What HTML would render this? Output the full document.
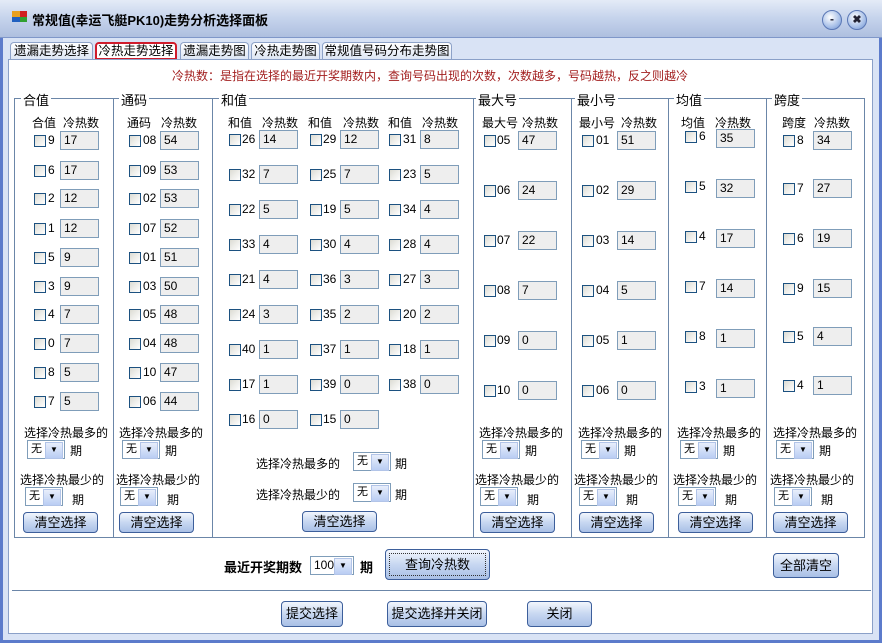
<!DOCTYPE html>
<html><head><meta charset="utf-8"><style>
*{margin:0;padding:0;box-sizing:border-box}
body{width:882px;height:643px;overflow:hidden;background:#5c7bcb;font:12px "Liberation Sans","WenQuanYi Zen Hei","Noto Sans CJK SC",sans-serif;color:#000;position:relative}
.a{position:absolute;white-space:nowrap}
#win{position:absolute;left:3px;top:0;width:876px;height:640px;background:#d9e3f5}
#title{position:absolute;left:0;top:0;width:882px;height:38px;background:linear-gradient(#e4ebf7,#c5d3ec 50%,#aebfdf);border-bottom:1px solid #7f97c9}
#panel{position:absolute;left:8px;top:59px;width:865px;height:575px;background:#fff;border:1px solid #8aa0c8}
.tab{position:absolute;top:42px;height:18px;border:1px solid #8da2c8;border-bottom:none;border-radius:4px 4px 0 0;background:linear-gradient(#fff,#dbe4f3);font-size:12.5px;line-height:16px;text-align:center;white-space:nowrap;overflow:visible}
.grp{position:absolute;top:98px;height:440px;border:1px solid #6b86a8}
.gl{position:absolute;top:90px;background:#fff;padding:0 2px;font-size:13px}
.cb{position:absolute;width:12px;height:12px;border:1px solid #1c5180;background:linear-gradient(135deg,#dcdcd4,#fff)}
.tb{position:absolute;width:39px;height:19px;border:1px solid #7f9db9;background:#eeeeee;padding-left:3px;line-height:17px}
.h{position:absolute;font-size:12px;white-space:nowrap}
.dd{position:absolute;width:38px;height:19px;border:1px solid #7f9db9;background:#fff;padding-left:3px;line-height:17px;font-size:11px}
.dd:after{content:"▼";position:absolute;right:1px;top:1px;width:16px;height:15px;background:linear-gradient(#e8eefb,#b9cdf3);border:1px solid #b2c4e8;font-size:8px;line-height:14px;text-align:center}
.btn{position:absolute;height:21px;border:1px solid #3d5f9b;border-radius:4px;background:linear-gradient(#f2f6fd,#c7d7f1 50%,#a9c0e6);text-align:center;line-height:19px;font-size:13px;white-space:nowrap}
</style></head><body>
<div id="win"></div>
<div id="title">
<div class="a" style="left:12px;top:11px;width:8px;height:6px;background:#e8a020"></div><div class="a" style="left:20px;top:11px;width:7px;height:6px;background:#d02020"></div><div class="a" style="left:12px;top:17px;width:8px;height:5px;background:#2060c0"></div><div class="a" style="left:20px;top:17px;width:7px;height:5px;background:#30a030"></div>
<div class="a" style="left:32px;top:10px;font-size:13px;font-weight:bold">常规值(幸运飞艇PK10)走势分析选择面板</div>
<div class="a" style="left:822px;top:10px;width:20px;height:20px;border-radius:50%;background:radial-gradient(circle at 40% 35%,#fff,#a8c0e8 60%,#6d8fcf);border:1px solid #5a77b5;text-align:center;font-weight:bold;line-height:16px;color:#223">-</div>
<div class="a" style="left:847px;top:10px;width:20px;height:20px;border-radius:50%;background:radial-gradient(circle at 40% 35%,#fff,#a8c0e8 60%,#6d8fcf);border:1px solid #5a77b5;text-align:center;font-weight:bold;line-height:18px;font-size:11px;color:#223">✖</div>
</div>
<div class="tab" style="left:10px;width:83px">遗漏走势选择</div>
<div class="tab" style="left:95px;width:82px;border:2px solid #d01c2c;background:#fff;height:18px;line-height:14px">冷热走势选择</div>
<div class="tab" style="left:180px;width:69px">遗漏走势图</div>
<div class="tab" style="left:251px;width:69px">冷热走势图</div>
<div class="tab" style="left:322px;width:130px">常规值号码分布走势图</div>
<div id="panel"></div>
<div class="a" style="left:172px;top:67px;color:#a32020">冷热数：是指在选择的最近开奖期数内，查询号码出现的次数，次数越多，号码越热，反之则越冷</div>

<div class="grp" style="left:14px;width:100px"></div>
<div class="grp" style="left:113px;width:100px"></div>
<div class="grp" style="left:212px;width:262px"></div>
<div class="grp" style="left:473px;width:99px"></div>
<div class="grp" style="left:571px;width:98px"></div>
<div class="grp" style="left:668px;width:99px"></div>
<div class="grp" style="left:766px;width:99px"></div>
<div class="gl" style="left:21px">合值</div><div class="gl" style="left:119px">通码</div><div class="gl" style="left:219px">和值</div><div class="gl" style="left:476px">最大号</div><div class="gl" style="left:575px">最小号</div><div class="gl" style="left:674px">均值</div><div class="gl" style="left:772px">跨度</div>

<div class="h" style="left:32px;top:114px">合值</div><div class="h" style="left:63px;top:114px">冷热数</div>
<div class="h" style="left:127px;top:114px">通码</div><div class="h" style="left:161px;top:114px">冷热数</div>
<div class="h" style="left:228px;top:114px">和值</div><div class="h" style="left:262px;top:114px">冷热数</div>
<div class="h" style="left:308px;top:114px">和值</div><div class="h" style="left:343px;top:114px">冷热数</div>
<div class="h" style="left:388px;top:114px">和值</div><div class="h" style="left:422px;top:114px">冷热数</div>
<div class="h" style="left:482px;top:114px">最大号</div><div class="h" style="left:522px;top:114px">冷热数</div>
<div class="h" style="left:579px;top:114px">最小号</div><div class="h" style="left:621px;top:114px">冷热数</div>
<div class="h" style="left:681px;top:114px">均值</div><div class="h" style="left:715px;top:114px">冷热数</div>
<div class="h" style="left:782px;top:114px">跨度</div><div class="h" style="left:814px;top:114px">冷热数</div>

<!-- 合值 -->
<div class="cb" style="left:34px;top:135px"></div><div class="a" style="left:48px;top:133px">9</div><div class="tb" style="left:60px;top:131px">17</div>
<div class="cb" style="left:34px;top:165px"></div><div class="a" style="left:48px;top:163px">6</div><div class="tb" style="left:60px;top:161px">17</div>
<div class="cb" style="left:34px;top:193px"></div><div class="a" style="left:48px;top:191px">2</div><div class="tb" style="left:60px;top:189px">12</div>
<div class="cb" style="left:34px;top:223px"></div><div class="a" style="left:48px;top:221px">1</div><div class="tb" style="left:60px;top:219px">12</div>
<div class="cb" style="left:34px;top:252px"></div><div class="a" style="left:48px;top:250px">5</div><div class="tb" style="left:60px;top:248px">9</div>
<div class="cb" style="left:34px;top:281px"></div><div class="a" style="left:48px;top:279px">3</div><div class="tb" style="left:60px;top:277px">9</div>
<div class="cb" style="left:34px;top:309px"></div><div class="a" style="left:48px;top:307px">4</div><div class="tb" style="left:60px;top:305px">7</div>
<div class="cb" style="left:34px;top:338px"></div><div class="a" style="left:48px;top:336px">0</div><div class="tb" style="left:60px;top:334px">7</div>
<div class="cb" style="left:34px;top:367px"></div><div class="a" style="left:48px;top:365px">8</div><div class="tb" style="left:60px;top:363px">5</div>
<div class="cb" style="left:34px;top:396px"></div><div class="a" style="left:48px;top:394px">7</div><div class="tb" style="left:60px;top:392px">5</div>
<!-- 通码 -->
<div class="cb" style="left:129px;top:135px"></div><div class="a" style="left:143px;top:133px">08</div><div class="tb" style="left:160px;top:131px">54</div>
<div class="cb" style="left:129px;top:165px"></div><div class="a" style="left:143px;top:163px">09</div><div class="tb" style="left:160px;top:161px">53</div>
<div class="cb" style="left:129px;top:193px"></div><div class="a" style="left:143px;top:191px">02</div><div class="tb" style="left:160px;top:189px">53</div>
<div class="cb" style="left:129px;top:223px"></div><div class="a" style="left:143px;top:221px">07</div><div class="tb" style="left:160px;top:219px">52</div>
<div class="cb" style="left:129px;top:252px"></div><div class="a" style="left:143px;top:250px">01</div><div class="tb" style="left:160px;top:248px">51</div>
<div class="cb" style="left:129px;top:281px"></div><div class="a" style="left:143px;top:279px">03</div><div class="tb" style="left:160px;top:277px">50</div>
<div class="cb" style="left:129px;top:309px"></div><div class="a" style="left:143px;top:307px">05</div><div class="tb" style="left:160px;top:305px">48</div>
<div class="cb" style="left:129px;top:338px"></div><div class="a" style="left:143px;top:336px">04</div><div class="tb" style="left:160px;top:334px">48</div>
<div class="cb" style="left:129px;top:367px"></div><div class="a" style="left:143px;top:365px">10</div><div class="tb" style="left:160px;top:363px">47</div>
<div class="cb" style="left:129px;top:396px"></div><div class="a" style="left:143px;top:394px">06</div><div class="tb" style="left:160px;top:392px">44</div>
<!-- 和值 col1 -->
<div class="cb" style="left:229px;top:134px"></div><div class="a" style="left:242px;top:132px">26</div><div class="tb" style="left:259px;top:130px">14</div>
<div class="cb" style="left:229px;top:169px"></div><div class="a" style="left:242px;top:167px">32</div><div class="tb" style="left:259px;top:165px">7</div>
<div class="cb" style="left:229px;top:204px"></div><div class="a" style="left:242px;top:202px">22</div><div class="tb" style="left:259px;top:200px">5</div>
<div class="cb" style="left:229px;top:239px"></div><div class="a" style="left:242px;top:237px">33</div><div class="tb" style="left:259px;top:235px">4</div>
<div class="cb" style="left:229px;top:274px"></div><div class="a" style="left:242px;top:272px">21</div><div class="tb" style="left:259px;top:270px">4</div>
<div class="cb" style="left:229px;top:309px"></div><div class="a" style="left:242px;top:307px">24</div><div class="tb" style="left:259px;top:305px">3</div>
<div class="cb" style="left:229px;top:344px"></div><div class="a" style="left:242px;top:342px">40</div><div class="tb" style="left:259px;top:340px">1</div>
<div class="cb" style="left:229px;top:379px"></div><div class="a" style="left:242px;top:377px">17</div><div class="tb" style="left:259px;top:375px">1</div>
<div class="cb" style="left:229px;top:414px"></div><div class="a" style="left:242px;top:412px">16</div><div class="tb" style="left:259px;top:410px">0</div>
<!-- col2 -->
<div class="cb" style="left:310px;top:134px"></div><div class="a" style="left:323px;top:132px">29</div><div class="tb" style="left:340px;top:130px">12</div>
<div class="cb" style="left:310px;top:169px"></div><div class="a" style="left:323px;top:167px">25</div><div class="tb" style="left:340px;top:165px">7</div>
<div class="cb" style="left:310px;top:204px"></div><div class="a" style="left:323px;top:202px">19</div><div class="tb" style="left:340px;top:200px">5</div>
<div class="cb" style="left:310px;top:239px"></div><div class="a" style="left:323px;top:237px">30</div><div class="tb" style="left:340px;top:235px">4</div>
<div class="cb" style="left:310px;top:274px"></div><div class="a" style="left:323px;top:272px">36</div><div class="tb" style="left:340px;top:270px">3</div>
<div class="cb" style="left:310px;top:309px"></div><div class="a" style="left:323px;top:307px">35</div><div class="tb" style="left:340px;top:305px">2</div>
<div class="cb" style="left:310px;top:344px"></div><div class="a" style="left:323px;top:342px">37</div><div class="tb" style="left:340px;top:340px">1</div>
<div class="cb" style="left:310px;top:379px"></div><div class="a" style="left:323px;top:377px">39</div><div class="tb" style="left:340px;top:375px">0</div>
<div class="cb" style="left:310px;top:414px"></div><div class="a" style="left:323px;top:412px">15</div><div class="tb" style="left:340px;top:410px">0</div>
<!-- col3 -->
<div class="cb" style="left:389px;top:134px"></div><div class="a" style="left:403px;top:132px">31</div><div class="tb" style="left:420px;top:130px">8</div>
<div class="cb" style="left:389px;top:169px"></div><div class="a" style="left:403px;top:167px">23</div><div class="tb" style="left:420px;top:165px">5</div>
<div class="cb" style="left:389px;top:204px"></div><div class="a" style="left:403px;top:202px">34</div><div class="tb" style="left:420px;top:200px">4</div>
<div class="cb" style="left:389px;top:239px"></div><div class="a" style="left:403px;top:237px">28</div><div class="tb" style="left:420px;top:235px">4</div>
<div class="cb" style="left:389px;top:274px"></div><div class="a" style="left:403px;top:272px">27</div><div class="tb" style="left:420px;top:270px">3</div>
<div class="cb" style="left:389px;top:309px"></div><div class="a" style="left:403px;top:307px">20</div><div class="tb" style="left:420px;top:305px">2</div>
<div class="cb" style="left:389px;top:344px"></div><div class="a" style="left:403px;top:342px">18</div><div class="tb" style="left:420px;top:340px">1</div>
<div class="cb" style="left:389px;top:379px"></div><div class="a" style="left:403px;top:377px">38</div><div class="tb" style="left:420px;top:375px">0</div>
<!-- 最大号 -->
<div class="cb" style="left:484px;top:135px"></div><div class="a" style="left:497px;top:133px">05</div><div class="tb" style="left:518px;top:131px">47</div>
<div class="cb" style="left:484px;top:185px"></div><div class="a" style="left:497px;top:183px">06</div><div class="tb" style="left:518px;top:181px">24</div>
<div class="cb" style="left:484px;top:235px"></div><div class="a" style="left:497px;top:233px">07</div><div class="tb" style="left:518px;top:231px">22</div>
<div class="cb" style="left:484px;top:285px"></div><div class="a" style="left:497px;top:283px">08</div><div class="tb" style="left:518px;top:281px">7</div>
<div class="cb" style="left:484px;top:335px"></div><div class="a" style="left:497px;top:333px">09</div><div class="tb" style="left:518px;top:331px">0</div>
<div class="cb" style="left:484px;top:385px"></div><div class="a" style="left:497px;top:383px">10</div><div class="tb" style="left:518px;top:381px">0</div>
<!-- 最小号 -->
<div class="cb" style="left:582px;top:135px"></div><div class="a" style="left:596px;top:133px">01</div><div class="tb" style="left:617px;top:131px">51</div>
<div class="cb" style="left:582px;top:185px"></div><div class="a" style="left:596px;top:183px">02</div><div class="tb" style="left:617px;top:181px">29</div>
<div class="cb" style="left:582px;top:235px"></div><div class="a" style="left:596px;top:233px">03</div><div class="tb" style="left:617px;top:231px">14</div>
<div class="cb" style="left:582px;top:285px"></div><div class="a" style="left:596px;top:283px">04</div><div class="tb" style="left:617px;top:281px">5</div>
<div class="cb" style="left:582px;top:335px"></div><div class="a" style="left:596px;top:333px">05</div><div class="tb" style="left:617px;top:331px">1</div>
<div class="cb" style="left:582px;top:385px"></div><div class="a" style="left:596px;top:383px">06</div><div class="tb" style="left:617px;top:381px">0</div>
<!-- 均值 -->
<div class="cb" style="left:685px;top:131px"></div><div class="a" style="left:699px;top:129px">6</div><div class="tb" style="left:716px;top:129px">35</div>
<div class="cb" style="left:685px;top:181px"></div><div class="a" style="left:699px;top:179px">5</div><div class="tb" style="left:716px;top:179px">32</div>
<div class="cb" style="left:685px;top:231px"></div><div class="a" style="left:699px;top:229px">4</div><div class="tb" style="left:716px;top:229px">17</div>
<div class="cb" style="left:685px;top:281px"></div><div class="a" style="left:699px;top:279px">7</div><div class="tb" style="left:716px;top:279px">14</div>
<div class="cb" style="left:685px;top:331px"></div><div class="a" style="left:699px;top:329px">8</div><div class="tb" style="left:716px;top:329px">1</div>
<div class="cb" style="left:685px;top:381px"></div><div class="a" style="left:699px;top:379px">3</div><div class="tb" style="left:716px;top:379px">1</div>
<!-- 跨度 -->
<div class="cb" style="left:783px;top:135px"></div><div class="a" style="left:797px;top:133px">8</div><div class="tb" style="left:813px;top:131px">34</div>
<div class="cb" style="left:783px;top:183px"></div><div class="a" style="left:797px;top:181px">7</div><div class="tb" style="left:813px;top:179px">27</div>
<div class="cb" style="left:783px;top:233px"></div><div class="a" style="left:797px;top:231px">6</div><div class="tb" style="left:813px;top:229px">19</div>
<div class="cb" style="left:783px;top:283px"></div><div class="a" style="left:797px;top:281px">9</div><div class="tb" style="left:813px;top:279px">15</div>
<div class="cb" style="left:783px;top:331px"></div><div class="a" style="left:797px;top:329px">5</div><div class="tb" style="left:813px;top:327px">4</div>
<div class="cb" style="left:783px;top:380px"></div><div class="a" style="left:797px;top:378px">4</div><div class="tb" style="left:813px;top:376px">1</div>

<!-- bottom controls per group -->
<div class="h" style="left:24px;top:424px">选择冷热最多的</div><div class="dd" style="left:27px;top:440px">无</div><div class="h" style="left:70px;top:442px">期</div>
<div class="h" style="left:20px;top:471px">选择冷热最少的</div><div class="dd" style="left:25px;top:487px">无</div><div class="h" style="left:72px;top:491px">期</div>
<div class="btn" style="left:23px;top:512px;width:75px">清空选择</div>

<div class="h" style="left:119px;top:424px">选择冷热最多的</div><div class="dd" style="left:122px;top:440px">无</div><div class="h" style="left:165px;top:442px">期</div>
<div class="h" style="left:116px;top:471px">选择冷热最少的</div><div class="dd" style="left:120px;top:487px">无</div><div class="h" style="left:167px;top:491px">期</div>
<div class="btn" style="left:119px;top:512px;width:75px">清空选择</div>

<div class="h" style="left:256px;top:455px">选择冷热最多的</div><div class="dd" style="left:353px;top:452px">无</div><div class="h" style="left:395px;top:455px">期</div>
<div class="h" style="left:256px;top:486px">选择冷热最少的</div><div class="dd" style="left:353px;top:483px">无</div><div class="h" style="left:395px;top:486px">期</div>
<div class="btn" style="left:302px;top:511px;width:75px">清空选择</div>

<div class="h" style="left:479px;top:424px">选择冷热最多的</div><div class="dd" style="left:482px;top:440px">无</div><div class="h" style="left:525px;top:442px">期</div>
<div class="h" style="left:475px;top:471px">选择冷热最少的</div><div class="dd" style="left:480px;top:487px">无</div><div class="h" style="left:527px;top:491px">期</div>
<div class="btn" style="left:480px;top:512px;width:75px">清空选择</div>

<div class="h" style="left:578px;top:424px">选择冷热最多的</div><div class="dd" style="left:581px;top:440px">无</div><div class="h" style="left:624px;top:442px">期</div>
<div class="h" style="left:574px;top:471px">选择冷热最少的</div><div class="dd" style="left:579px;top:487px">无</div><div class="h" style="left:626px;top:491px">期</div>
<div class="btn" style="left:579px;top:512px;width:75px">清空选择</div>

<div class="h" style="left:677px;top:424px">选择冷热最多的</div><div class="dd" style="left:680px;top:440px">无</div><div class="h" style="left:723px;top:442px">期</div>
<div class="h" style="left:673px;top:471px">选择冷热最少的</div><div class="dd" style="left:678px;top:487px">无</div><div class="h" style="left:725px;top:491px">期</div>
<div class="btn" style="left:678px;top:512px;width:75px">清空选择</div>

<div class="h" style="left:773px;top:424px">选择冷热最多的</div><div class="dd" style="left:776px;top:440px">无</div><div class="h" style="left:819px;top:442px">期</div>
<div class="h" style="left:770px;top:471px">选择冷热最少的</div><div class="dd" style="left:774px;top:487px">无</div><div class="h" style="left:821px;top:491px">期</div>
<div class="btn" style="left:773px;top:512px;width:75px">清空选择</div>

<!-- query row -->
<div class="h" style="left:224px;top:557px;font-weight:bold;font-size:13px">最近开奖期数</div>
<div class="dd" style="left:310px;top:556px;width:44px;font-size:12px">100</div>
<div class="h" style="left:360px;top:557px;font-weight:bold;font-size:13px">期</div>
<div class="btn" style="left:385px;top:549px;width:105px;height:31px;line-height:29px"><div style="position:absolute;left:3px;top:3px;right:3px;bottom:3px;border:1px dotted #333"></div>查询冷热数</div>
<div class="btn" style="left:773px;top:553px;width:66px;height:25px;line-height:23px">全部清空</div>
<div class="a" style="left:12px;top:590px;width:859px;height:1px;background:#6b86a8"></div>
<div class="btn" style="left:281px;top:601px;width:62px;height:26px;line-height:24px">提交选择</div>
<div class="btn" style="left:387px;top:601px;width:100px;height:26px;line-height:24px">提交选择并关闭</div>
<div class="btn" style="left:527px;top:601px;width:65px;height:26px;line-height:24px">关闭</div>
</body></html>
